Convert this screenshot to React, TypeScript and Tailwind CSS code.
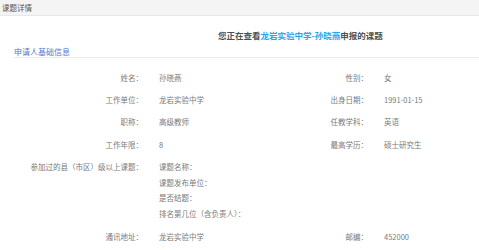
import React from "react";

const font = { fontFamily: '"Noto Sans CJK SC", "Noto Sans", sans-serif' };

function Row({ l1, v1, l2, v2 }: { l1: string; v1: string; l2?: string; v2?: string }) {
  return (
    <div className="grid grid-cols-[143px_150px_75px_1fr] h-[22.4px] items-center">
      <div className="text-right">{l1}</div>
      <div className="pl-[16px]">{v1}</div>
      <div className="text-right">{l2}</div>
      <div className="pl-[16px]">{v2}</div>
    </div>
  );
}

export default function App() {
  return (
    <div className="w-[479px] h-[250px] overflow-hidden bg-white text-[#7a7a7a] text-[7.5px]" style={font}>
      <div className="h-[16px] bg-[#f4f4f4] border-b border-[#e8e8e8] flex items-center pl-[2px] text-[#555]">
        课题详情
      </div>
      <div className="mt-[13px] pl-[218px] h-[12px] leading-[12px] text-[8.5px] font-semibold text-[#505050] whitespace-nowrap">
        您正在查看<span className="text-[#28a3f0]">龙岩实验中学-孙晓燕</span>申报的课题
      </div>
      <div className="mt-[5px] ml-[14px] h-[12px] leading-[11px] text-[8px] text-[#5478c8] border-b border-[#ebebeb]">
        申请人基础信息
      </div>
      <div className="mt-[8px]">
        <Row l1="姓名：" v1="孙晓燕" l2="性别：" v2="女" />
        <Row l1="工作单位：" v1="龙岩实验中学" l2="出身日期：" v2="1991-01-15" />
        <Row l1="职称：" v1="高级教师" l2="任教学科：" v2="英语" />
        <Row l1="工作年限：" v1="8" l2="最高学历：" v2="硕士研究生" />
        <div className="grid grid-cols-[143px_1fr] mt-[3.5px]">
          <div className="text-right leading-[15.7px] whitespace-nowrap">参加过的县（市区）级以上课题：</div>
          <div className="pl-[16px] leading-[15.7px] whitespace-nowrap">
            <div>课题名称：</div>
            <div>课题发布单位：</div>
            <div>是否结题：</div>
            <div>排名第几位（含负责人）：</div>
          </div>
        </div>
        <div className="mt-[4px]">
          <Row l1="通讯地址：" v1="龙岩实验中学" l2="邮编：" v2="452000" />
        </div>
      </div>
    </div>
  );
}
